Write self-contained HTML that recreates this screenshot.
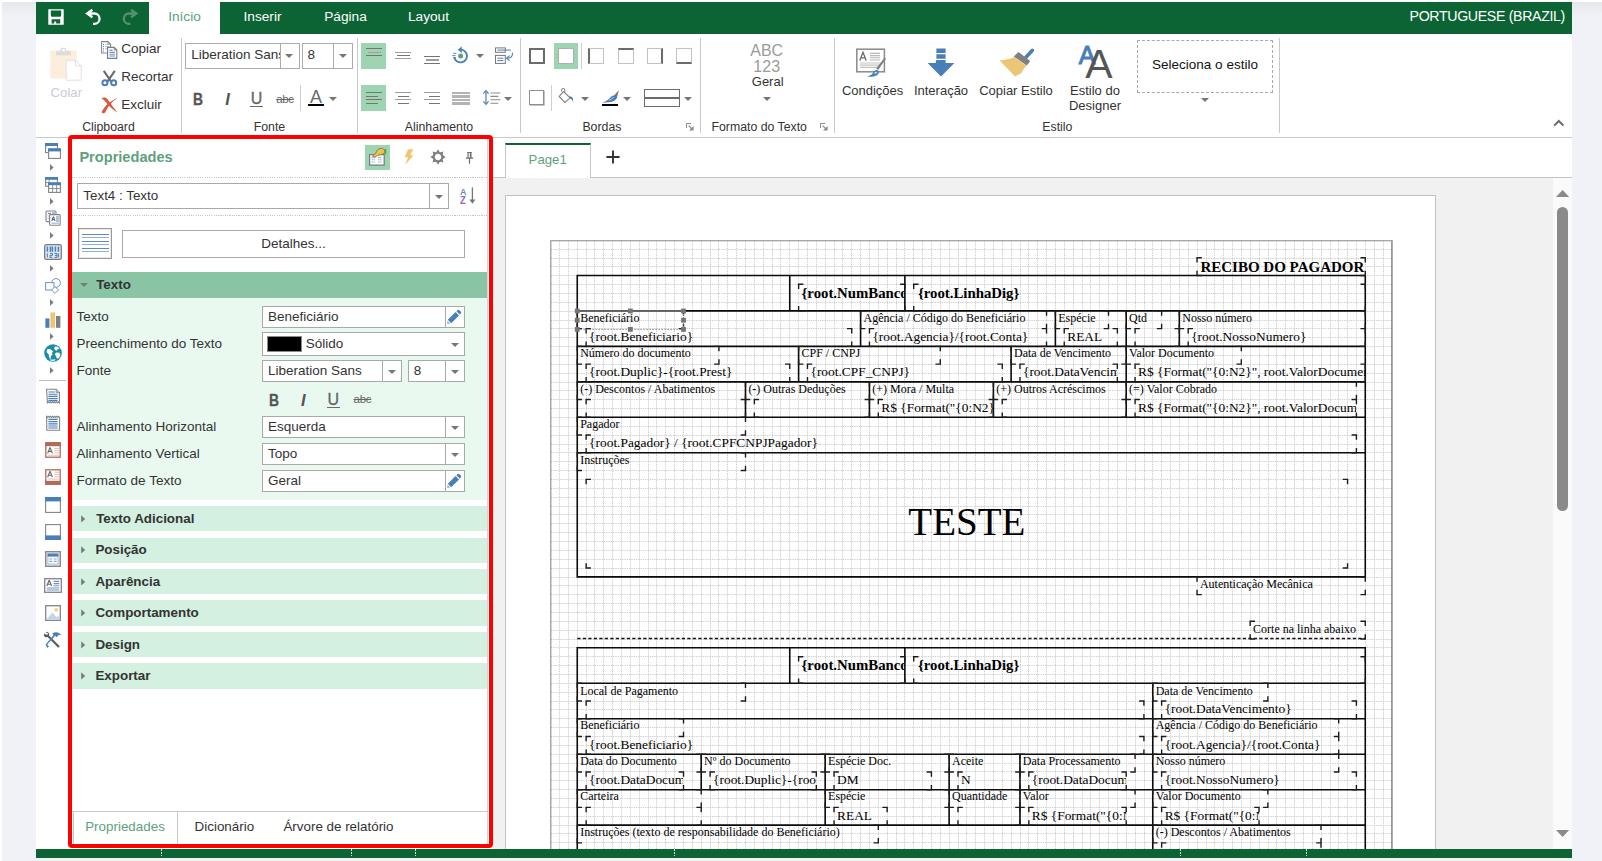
<!DOCTYPE html>
<html lang="pt-BR">
<head>
<meta charset="utf-8">
<title>Designer</title>
<style>
html,body{margin:0;padding:0}
body{width:1602px;height:861px;overflow:hidden;position:relative;background:#fff;font-family:"Liberation Sans",Arial,sans-serif;font-size:13px;color:#333}
body:before{content:"";position:absolute;left:2px;top:2px;right:0;bottom:0;background:linear-gradient(180deg,#e6e7ec 0,#f1f2f7 14px,#f1f2f7 100%)}
body>div,body>svg{position:absolute;box-sizing:border-box}
div div,div svg{position:absolute;box-sizing:border-box}
.t{height:20px;line-height:20px;white-space:nowrap}
svg{overflow:visible}
.rep,.rep div{font-family:"Liberation Serif","Times New Roman",serif;color:#000}

</style>
</head>
<body>
<!-- frame -->
<div style="left:36px;top:2px;width:1536px;height:856px;background:#fff"></div>
<div style="left:36px;top:2px;width:1536px;height:32px;background:#0c6333"></div>
<svg style="left:48px;top:9px;" width="16" height="16" viewBox="0 0 16 16"><path fill="#fff" fill-rule="evenodd" d="M0.3 0.3h15.4v15.4h-15.4z M2.8 1.6v4.6q0 1.6 1.6 1.6h7.2q1.6 0 1.6-1.6v-4.6z M3.6 10.2v4.2h2.6v-2h2v2h4v-4.2z"/></svg>
<svg style="left:84px;top:8px;" width="18" height="18" viewBox="0 0 18 18"><path fill="none" stroke="#fff" stroke-width="2.300" d="M8.400 1.700L3.100 5.500l5.300 3.800M3.800 5.500h6.600a5.150 5.150 0 0 1 0 10.300h-1.400"/></svg>
<svg style="left:121px;top:8px;" width="18" height="18" viewBox="0 0 18 18"><path opacity="0.300" fill="none" stroke="#fff" stroke-width="2.300" d="M10 1.700l5.300 3.800-5.300 3.800M14.600 5.500h-6.600a5.150 5.150 0 0 0 0 10.300h1.400"/></svg>
<div style="left:149px;top:2px;width:71px;height:33px;background:#fff"></div>
<div class="t" style="left:34.5px;top:6.8px;width:300px;text-align:center;font-size:13.7px;color:#5f9f7e;">Início</div>
<div class="t" style="left:112.5px;top:6.8px;width:300px;text-align:center;font-size:13.7px;color:#fff;">Inserir</div>
<div class="t" style="left:195.5px;top:6.8px;width:300px;text-align:center;font-size:13.7px;color:#fff;">Página</div>
<div class="t" style="left:278.5px;top:6.8px;width:300px;text-align:center;font-size:13.7px;color:#fff;">Layout</div>
<div class="t" style="left:1265px;top:5.8px;width:300px;text-align:right;font-size:14.2px;color:#fff;letter-spacing:-0.35px;">PORTUGUESE (BRAZIL)</div>
<div style="left:36px;top:137px;width:1536px;height:1px;background:#c8c8c8"></div>
<!-- ribbon -->
<svg style="left:50px;top:46px;" width="33" height="36" viewBox="0 0 33 36"><rect x="0.2" y="4.6" width="26.6" height="27.8" rx="1" fill="#fbeedc"/><path d="M6 9.2v-3.2q0-1 1-1h3.4v-1.6q0-1.6 1.6-1.6h2.6q1.6 0 1.6 1.6v1.6h3.6q1 0 1 1v3.2z" fill="#dcdcdc"/><rect x="12" y="3" width="2.8" height="2.4" fill="#fff"/><path d="M16.2 14.4h9.4l5.6 5.6v14.2h-15z" fill="#fff" stroke="#e1e1e1" stroke-width="1"/><path d="M25.6 14.4v5.6h5.6" fill="none" stroke="#e1e1e1" stroke-width="1"/></svg>
<div class="t" style="left:-83.7px;top:82.9px;width:300px;text-align:center;font-size:13.3px;color:#cbcbd6;">Colar</div>
<svg style="left:101px;top:41px;" width="17" height="18" viewBox="0 0 17 18"><path d="M0.6 0.6h6.4l2.6 2.6v8.8h-9z" fill="#fff" stroke="#8a8a8a" stroke-width="1.1"/><path d="M7 0.6v2.6h2.6" fill="none" stroke="#8a8a8a" stroke-width="0.9"/><path d="M2 3.4h1M2 5.6h1M2 7.8h1M2 10h1" stroke="#4a7eb8" stroke-width="1"/><path d="M4 3.4h3M4 5.6h4M4 7.8h2" stroke="#a9c3e2" stroke-width="1"/><path d="M6.6 6.4h6.6l2.6 2.6v8.4h-9.2z" fill="#fff" stroke="#7b7b7b" stroke-width="1.1"/><path d="M13.2 6.4v2.6h2.6" fill="none" stroke="#7b7b7b" stroke-width="0.9"/><path d="M8.4 9.2h3.2" stroke="#4a7eb8" stroke-width="1"/><path d="M8.4 11.4h5.6M8.4 13.2h5.6M8.4 15h5.6" stroke="#6f97c8" stroke-width="1.1"/></svg>
<div class="t" style="left:121.2px;top:39.2px;font-size:13.5px;color:#333;">Copiar</div>
<svg style="left:101px;top:70px;" width="17" height="17" viewBox="0 0 17 17"><path d="M2.800 0.800l7.400 10.800M13.800 0.800l-7.400 10.800" stroke="#6b6b6b" stroke-width="2.100" fill="none"/><circle cx="3.900" cy="12.700" r="2.500" fill="#fff" stroke="#4a7eb8" stroke-width="2"/><circle cx="12.700" cy="12.700" r="2.500" fill="#fff" stroke="#4a7eb8" stroke-width="2"/></svg>
<div class="t" style="left:121.2px;top:67.2px;font-size:13.5px;color:#333;">Recortar</div>
<svg style="left:101px;top:97px;" width="17" height="17" viewBox="0 0 17 17"><path d="M0.400 1.600c1.800-1.600 4.400-1.600 6.200.600 2.400 3 5.600 8.400 10 13.400-5.200-3.200-8.600-6.400-10.800-9.400-1.600-2-3.200-3.600-5.400-4.600z" fill="#d9573b"/><path d="M16.600 1.200c-5.200 2.800-9.600 7.800-12 13.600-.600 1.600-2.600 2-4 .800 2.200-6.200 8.600-11.800 16-14.400z" fill="#d9573b"/></svg>
<div class="t" style="left:121.2px;top:95.2px;font-size:13.5px;color:#333;">Excluir</div>
<div class="t" style="left:-41.5px;top:117.2px;width:300px;text-align:center;font-size:12.3px;color:#333;">Clipboard</div>
<div style="left:180.9px;top:38px;width:1px;height:95px;background:#c9c9c9"></div>
<div style="left:185px;top:43px;width:115px;height:26px;background:#fff;border:1px solid #ababab"></div>
<div style="left:280px;top:43px;width:1px;height:26px;background:#ababab"></div>
<div style="left:186px;top:44px;width:94px;height:24px;overflow:hidden"><div class="t" style="left:5.2px;top:1.1px;font-size:13.5px;color:#333;">Liberation Sans</div></div>
<svg style="left:285.4px;top:54.3px;" width="8" height="4" viewBox="0 0 8 4"><path d="M0 0h8l-4 4z" fill="#767676"/></svg>
<div style="left:302px;top:43px;width:51px;height:26px;background:#fff;border:1px solid #ababab"></div>
<div style="left:333px;top:43px;width:1px;height:26px;background:#ababab"></div>
<div class="t" style="left:307.5px;top:45.1px;font-size:13.5px;color:#333;">8</div>
<svg style="left:339.4px;top:54.3px;" width="8" height="4" viewBox="0 0 8 4"><path d="M0 0h8l-4 4z" fill="#767676"/></svg>
<div class="t" style="left:47.80000000000001px;top:88.8px;width:300px;text-align:center;font-size:16.5px;color:#555;font-weight:bold;transform:scaleX(0.84);-webkit-text-stroke:0.3px #555;">B</div>
<div class="t" style="left:77.6px;top:88.8px;width:300px;text-align:center;font-size:16.5px;color:#555;font-weight:bold;font-style:italic;">I</div>
<div class="t" style="left:106.60000000000002px;top:88.8px;width:300px;text-align:center;font-size:16px;color:#666;-webkit-text-stroke:0.3px #666;">U</div>
<div style="left:250.2px;top:106.2px;width:12.8px;height:1px;background:#6a6a6a"></div>
<div class="t" style="left:135.0px;top:88.5px;width:300px;text-align:center;font-size:11.5px;color:#666;text-decoration:line-through;letter-spacing:-0.3px;">abc</div>
<div style="left:300px;top:85px;width:1px;height:26px;background:#cfcfcf"></div>
<div class="t" style="left:166.0px;top:86.7px;width:300px;text-align:center;font-size:18px;color:#6a6a6a;">A</div>
<div style="left:308px;top:103.8px;width:16px;height:2.1px;background:#000"></div>
<svg style="left:329.4px;top:96.8px;" width="8" height="4" viewBox="0 0 8 4"><path d="M0 0h8l-4 4z" fill="#767676"/></svg>
<div class="t" style="left:119.5px;top:117.2px;width:300px;text-align:center;font-size:12.3px;color:#333;">Fonte</div>
<div style="left:356.9px;top:38px;width:1px;height:95px;background:#c9c9c9"></div>
<div style="left:361px;top:43px;width:25px;height:26px;background:#9fd4b3"></div>
<div style="left:366.0px;top:47.95px;width:16px;height:1.1px;background:#757575"></div><div style="left:367.5px;top:51.550000000000004px;width:13px;height:1.1px;background:#9e9e9e"></div><div style="left:366.0px;top:55.150000000000006px;width:16px;height:1.1px;background:#757575"></div>
<div style="left:395.0px;top:51.550000000000004px;width:16px;height:1.1px;background:#9e9e9e"></div><div style="left:396.5px;top:54.95px;width:13px;height:1.1px;background:#757575"></div><div style="left:395.0px;top:58.35px;width:16px;height:1.1px;background:#9e9e9e"></div>
<div style="left:424.0px;top:55.95px;width:16px;height:1.1px;background:#757575"></div><div style="left:425.5px;top:59.45px;width:13px;height:1.1px;background:#9e9e9e"></div><div style="left:424.0px;top:62.85px;width:16px;height:1.1px;background:#757575"></div>
<svg style="left:451px;top:46px;" width="19" height="19" viewBox="0 0 19 19"><path d="M9.6 3.6a6.4 6.4 0 1 1-6.3 7.6" fill="none" stroke="#4a7eb8" stroke-width="1.9"/><path d="M10.8 0.4l-4 3.4 4 3.2z" fill="#4a7eb8"/><circle cx="9.6" cy="10" r="2.5" fill="#5f9f7e"/><path d="M2.2 7.4h3M1.2 9.6h3.4M2.2 11.600h2.600" stroke="#4a7eb8" stroke-width="0.9"/></svg>
<svg style="left:475.5px;top:54.3px;" width="8" height="4" viewBox="0 0 8 4"><path d="M0 0h8l-4 4z" fill="#767676"/></svg>
<svg style="left:495px;top:46.6px;" width="19" height="18" viewBox="0 0 19 18"><rect x="0.5" y="0.9" width="9.8" height="4.4" fill="#fff" stroke="#777" stroke-width="1"/><rect x="0.5" y="8.4" width="9.8" height="8" fill="#fff" stroke="#777" stroke-width="1"/><path d="M2.400 3.100h13.400M2.400 11.200h6M2.400 13.600h6" stroke="#4a7eb8" stroke-width="1"/><path d="M17.400 5.800c.4 3.400-1.600 5.400-5 5.400" fill="none" stroke="#4a7eb8" stroke-width="1.1"/><path d="M14.600 8.600l-3.200 2.600 3.200 2.400" fill="none" stroke="#4a7eb8" stroke-width="1.100"/></svg>
<div style="left:361px;top:85px;width:25px;height:26px;background:#9fd4b3"></div>
<div style="left:366px;top:92.35000000000001px;width:16px;height:1.1px;background:#757575"></div><div style="left:366px;top:95.75px;width:11.5px;height:1.1px;background:#757575"></div><div style="left:366px;top:99.15px;width:16px;height:1.1px;background:#757575"></div><div style="left:366px;top:102.65px;width:11.5px;height:1.1px;background:#757575"></div>
<div style="left:395.0px;top:92.35000000000001px;width:16px;height:1.1px;background:#9e9e9e"></div><div style="left:397.5px;top:95.75px;width:11px;height:1.1px;background:#757575"></div><div style="left:395.0px;top:99.15px;width:16px;height:1.1px;background:#9e9e9e"></div><div style="left:397.5px;top:102.65px;width:11px;height:1.1px;background:#757575"></div>
<div style="left:424px;top:92.35000000000001px;width:16px;height:1.1px;background:#9e9e9e"></div><div style="left:428.5px;top:95.75px;width:11.5px;height:1.1px;background:#757575"></div><div style="left:424px;top:99.15px;width:16px;height:1.1px;background:#9e9e9e"></div><div style="left:428.5px;top:102.65px;width:11.5px;height:1.1px;background:#757575"></div>
<div style="left:452px;top:91.9px;width:18px;height:2.2px;background:#b3b3b3"></div>
<div style="left:452px;top:95.4px;width:18px;height:2.2px;background:#b3b3b3"></div>
<div style="left:452px;top:98.9px;width:18px;height:2.2px;background:#b3b3b3"></div>
<div style="left:452px;top:102.4px;width:18px;height:2.2px;background:#b3b3b3"></div>
<svg style="left:483px;top:90px;" width="18" height="15" viewBox="0 0 18 15"><path d="M3 2v11" stroke="#4a7eb8" stroke-width="1.2"/><path d="M0.400 3.600l2.600-3 2.600 3M0.400 11.400l2.600 3 2.600-3" fill="none" stroke="#4a7eb8" stroke-width="1.2"/><path d="M7.400 3h10M7.400 6.400h8M7.400 9.800h10M7.400 13.200h8" stroke="#8a8a8a" stroke-width="1.100"/></svg>
<svg style="left:504.4px;top:96.8px;" width="8" height="4" viewBox="0 0 8 4"><path d="M0 0h8l-4 4z" fill="#767676"/></svg>
<div class="t" style="left:289.0px;top:117.2px;width:300px;text-align:center;font-size:12.3px;color:#333;">Alinhamento</div>
<div style="left:519.9px;top:38px;width:1px;height:95px;background:#c9c9c9"></div>
<div style="left:529.2px;top:48.2px;width:15.6px;height:15.4px;border:2px solid #6b6b6b;background:#fff"></div>
<div style="left:554px;top:43px;width:24px;height:26px;background:#9fd4b3"></div>
<div style="left:558.2px;top:48.2px;width:15.6px;height:15.4px;border:1px solid #b0b0b0;background:#fff"></div>
<div style="left:581px;top:43px;width:1px;height:26px;background:#cfcfcf"></div>
<div style="left:588.2px;top:48.2px;width:15.6px;height:15.4px;border:1px solid #c2c2c2;border-left:2px solid #6b6b6b;background:#fff"></div>
<div style="left:618.2px;top:48.2px;width:15.6px;height:15.4px;border:1px solid #c2c2c2;border-top:2px solid #6b6b6b;background:#fff"></div>
<div style="left:647.2px;top:48.2px;width:15.6px;height:15.4px;border:1px solid #c2c2c2;border-right:2px solid #6b6b6b;background:#fff"></div>
<div style="left:676.2px;top:48.2px;width:15.6px;height:15.4px;border:1px solid #c2c2c2;border-bottom:2px solid #6b6b6b;background:#fff"></div>
<div style="left:529.2px;top:90.2px;width:15.2px;height:14.8px;border:1px solid #8f8f8f;background:#fff;box-shadow:0.8px 0.8px 0 #b5b5b5"></div>
<div style="left:551px;top:85px;width:1px;height:26px;background:#cfcfcf"></div>
<svg style="left:558px;top:88px;" width="18" height="17" viewBox="0 0 18 17"><path d="M3.600 3.400v-1.400q0-1.600 1.600-1.600t1.600 1.600v4.600" fill="none" stroke="#808080" stroke-width="1"/><path d="M5.400 3.600l6.800 6.200-5.400 4.600-5.600-6z" fill="#fff" stroke="#808080" stroke-width="1.1"/><path d="M11.600 8.200c2.800.2 4 2 3.400 5.800-.6-2-1.600-3.400-3.600-3.800z" fill="#4a7eb8"/></svg>
<svg style="left:581.3px;top:96.8px;" width="8" height="4" viewBox="0 0 8 4"><path d="M0 0h8l-4 4z" fill="#767676"/></svg>
<svg style="left:601px;top:88px;" width="19" height="18" viewBox="0 0 19 18"><path d="M17.800 2l-4.800 5.600 3.200 1.400z" fill="#7d7d7d"/><path d="M1 14.200c3.600-.2 6-2.200 8.400-4.800 1.600-1.600 3.400-2.600 6-2l.8 2.200c-1.400 2.600-3.600 4-6.600 4.400-2.600.4-5.400.8-8.600.2z" fill="#4a7eb8"/><path d="M8 12.200c1.800-.4 3.600-1.600 4.600-3" stroke="#cfe0f2" stroke-width="0.9" fill="none"/></svg>
<div style="left:602px;top:103.8px;width:16px;height:2.1px;background:#000"></div>
<svg style="left:623.3px;top:96.8px;" width="8" height="4" viewBox="0 0 8 4"><path d="M0 0h8l-4 4z" fill="#767676"/></svg>
<div style="left:644px;top:89px;width:36px;height:18px;border:1px solid #6b6b6b;background:#fff"></div>
<div style="left:644px;top:96.7px;width:36px;height:2px;background:#6b6b6b"></div>
<svg style="left:684.4px;top:96.8px;" width="8" height="4" viewBox="0 0 8 4"><path d="M0 0h8l-4 4z" fill="#767676"/></svg>
<div class="t" style="left:451.9px;top:117.2px;width:300px;text-align:center;font-size:12.3px;color:#333;">Bordas</div>
<svg style="left:686px;top:123px;" width="8" height="8" viewBox="0 0 8 8"><path d="M0.5 5v-4.5h4.5" fill="none" stroke="#8a8a8a" stroke-width="1"/><path d="M7.6 3v4.6h-4.6z" fill="#8a8a8a"/><path d="M2.6 2.6l3.4 3.4" stroke="#8a8a8a" stroke-width="1.1"/></svg>
<div style="left:700.1px;top:38px;width:1px;height:95px;background:#c9c9c9"></div>
<div class="t" style="left:616.7px;top:40.7px;width:300px;text-align:center;font-size:16px;color:#9b9b9b;">ABC</div>
<div class="t" style="left:616.7px;top:56.8px;width:300px;text-align:center;font-size:16px;color:#9b9b9b;">123</div>
<div class="t" style="left:617.7px;top:71.5px;width:300px;text-align:center;font-size:13px;color:#333;">Geral</div>
<svg style="left:763.4px;top:97px;" width="8" height="4" viewBox="0 0 8 4"><path d="M0 0h8l-4 4z" fill="#767676"/></svg>
<div class="t" style="left:609.2px;top:117.2px;width:300px;text-align:center;font-size:12.3px;color:#333;">Formato do Texto</div>
<svg style="left:820px;top:123px;" width="8" height="8" viewBox="0 0 8 8"><path d="M0.5 5v-4.5h4.5" fill="none" stroke="#8a8a8a" stroke-width="1"/><path d="M7.6 3v4.6h-4.6z" fill="#8a8a8a"/><path d="M2.6 2.6l3.4 3.4" stroke="#8a8a8a" stroke-width="1.1"/></svg>
<div style="left:834.1px;top:38px;width:1px;height:95px;background:#c9c9c9"></div>
<svg style="left:856px;top:48px;" width="31" height="30" viewBox="0 0 31 30"><rect x="0.8" y="1.2" width="27.600" height="22.600" fill="#fff" stroke="#8a8a8a" stroke-width="1.5"/><path d="M14 5.400h10M14 7.600h10M14 9.800h10M14 12h10" stroke="#b9b9b9" stroke-width="1.100"/><path d="M4 15h20M4 17.200h20M4 19.400h20" stroke="#c4c4c4" stroke-width="1.2"/><path d="M3.800 12.400l3.200-8.200 3.200 8.200M4.900 9.800h4.400" fill="none" stroke="#6a6a6a" stroke-width="1.3"/><path d="M30 10.600l-1.400-1-8.400 10.800 2 1.600z" fill="#7f7f7f"/><path d="M11 28.400c3.400-.4 5.600-2.400 7.400-5.400 1.400-1.200 3-1.200 4.200.2.400 1.800-.2 3.200-2 4.200-3 1.400-6 1.600-9.600 1z" fill="#4a7eb8"/><ellipse cx="19.600" cy="24.800" rx="1.300" ry="0.800" fill="#e8f0fa" transform="rotate(-35 19.600 24.800)"/></svg>
<div class="t" style="left:722.6px;top:81.4px;width:300px;text-align:center;font-size:13px;color:#333;">Condições</div>
<svg style="left:927px;top:48px;" width="28" height="29" viewBox="0 0 28 29"><path d="M9.400 0.400h9.200v4.600h-9.200zM9.400 6.200h9.200v4.600h-9.200zM9.400 12h9.200v3h8.800l-13.400 13.600-13.400-13.600h8z" fill="#4a7eb8"/></svg>
<div class="t" style="left:791.0px;top:81.4px;width:300px;text-align:center;font-size:13px;color:#333;">Interação</div>
<svg style="left:1000px;top:47px;" width="34" height="31" viewBox="0 0 34 31"><path d="M32.400 3.300L25.300 11" stroke="#4a7eb8" stroke-width="3.600" stroke-linecap="round" fill="none"/><path d="M17.900 5.600q.6-.5 1.300 0l10.400 8q.6.600.100 1.300l-3 3.600-12.900-9z" fill="#808080"/><path d="M14 10l12.600 8.700c-2.600 2.400-4 5-5.300 7.500-1.600 1-3.600 2-6.200 3.300l-15.700-16.300c5.600-.200 10.600-1 14.600-3.200z" fill="#ecc577"/></svg>
<div class="t" style="left:866.0px;top:81.4px;width:300px;text-align:center;font-size:13px;color:#333;">Copiar Estilo</div>
<div class="t" style="left:937.0px;top:44.7px;width:300px;text-align:center;font-size:25px;color:#4a7eb8;-webkit-text-stroke:1px #4a7eb8;">A</div>
<div class="t" style="left:949.0px;top:54.1px;width:300px;text-align:center;font-size:41px;color:#555;">A</div>
<div class="t" style="left:945.0px;top:81.4px;width:300px;text-align:center;font-size:13px;color:#333;">Estilo do</div>
<div class="t" style="left:945.0px;top:95.8px;width:300px;text-align:center;font-size:13px;color:#333;">Designer</div>
<div style="left:1137px;top:40px;width:136px;height:53px;border:1px dashed #a8a8a8"></div>
<div class="t" style="left:1055.0px;top:55.2px;width:300px;text-align:center;font-size:13.5px;color:#111;">Seleciona o estilo</div>
<svg style="left:1200.5px;top:97.7px;" width="8" height="4" viewBox="0 0 8 4"><path d="M0 0h8l-4 4z" fill="#767676"/></svg>
<div class="t" style="left:907.4000000000001px;top:117.2px;width:300px;text-align:center;font-size:12.3px;color:#333;">Estilo</div>
<div style="left:1279.1px;top:38px;width:1px;height:95px;background:#c9c9c9"></div>
<svg style="left:1553px;top:118.5px;" width="12" height="8" viewBox="0 0 12 8"><path d="M1.200 6.600l4.600-4.600 4.600 4.600" fill="none" stroke="#6a6a6a" stroke-width="2"/></svg>
<!-- left -->
<svg style="left:45px;top:142.9px;" width="16" height="16" viewBox="0 0 16 16"><rect x="0.6" y="0.6" width="11.8" height="9" fill="#fff" stroke="#848484" stroke-width="1.1"/><rect x="0" y="0" width="13" height="3" fill="#4a7eb8"/><rect x="3.600" y="6" width="11.800" height="9.400" fill="#fff" stroke="#848484" stroke-width="1.1"/><rect x="3" y="5.400" width="13" height="3" fill="#4a7eb8"/></svg>
<svg style="left:45px;top:176.6px;" width="16" height="16" viewBox="0 0 16 16"><rect x="0.6" y="0.6" width="11.8" height="8.600" fill="#fff" stroke="#848484" stroke-width="1.1"/><rect x="0" y="0" width="13" height="2.800" fill="#4a7eb8"/><path d="M0.600 5.400h3M4.200 3v3" stroke="#848484" stroke-width="0.9"/><rect x="3.600" y="6" width="11.800" height="9.400" fill="#fff" stroke="#848484" stroke-width="1.1"/><rect x="3" y="5.400" width="13" height="2.800" fill="#4a7eb8"/><path d="M3.600 11.600h11.800M7.600 8.200v7.200M11.600 8.200v7.200" stroke="#848484" stroke-width="0.9"/></svg>
<svg style="left:45px;top:210.4px;" width="16" height="16" viewBox="0 0 16 16"><rect x="1" y="1" width="10" height="10.600" rx="1" fill="#fff" stroke="#848484" stroke-width="1.1"/><path d="M3 3.400h3M7 3h3" stroke="#4a7eb8" stroke-width="1"/><path d="M2.600 6h1.600M2.600 8.600h1.600" stroke="#9bb6da" stroke-width="1"/><rect x="4.600" y="4.600" width="10.600" height="10.600" rx="1" fill="#fff" stroke="#848484" stroke-width="1.1"/><path d="M6.800 11l1.400-4.200h.4l1.400 4.200M7.300 9.600h2.200" fill="none" stroke="#555" stroke-width="1"/><path d="M11 7h3M11 9h3M11 11h3" stroke="#4a7eb8" stroke-width="0.9"/><path d="M6.400 13.200h7.600" stroke="#9bb6da" stroke-width="1.100"/></svg>
<svg style="left:44px;top:244.1px;" width="18" height="16" viewBox="0 0 18 16"><rect x="0.700" y="0.700" width="16.600" height="14.600" rx="1.600" fill="#dfe8f4" stroke="#7b7b7b" stroke-width="1.300"/><path d="M3.400 2.400v5.400M6.400 2.400v5.400M8.400 2.400v5.400M11.400 2.400v5.400M14.400 2.400v5.400" stroke="#4a7eb8" stroke-width="1.500"/><path d="M3.400 9.400v4M6 9.400h2.400v2h-2.400v2h2.400M10.400 9.400h2.600v4h-2.600M10.800 11.400h2.200M14.600 9.400v4" fill="none" stroke="#4a7eb8" stroke-width="1"/></svg>
<svg style="left:45px;top:277.9px;" width="16" height="16" viewBox="0 0 16 16"><circle cx="11" cy="5" r="4.400" fill="#fff" stroke="#6d93c6" stroke-width="1"/><rect x="0.600" y="4.600" width="8.400" height="7.400" fill="#fff" stroke="#6d93c6" stroke-width="1"/><path d="M10 8.600l3.400 3.400-3.400 3.400-3.400-3.400z" fill="#fff" stroke="#6d93c6" stroke-width="1"/></svg>
<svg style="left:45px;top:311.6px;" width="16" height="16" viewBox="0 0 16 16"><rect x="0.400" y="6.400" width="4" height="9.400" fill="#4a7eb8"/><rect x="5.400" y="0.400" width="4.600" height="15.400" fill="#ecc577"/><rect x="11" y="4" width="4.400" height="11.800" fill="#808080"/></svg>
<svg style="left:44px;top:344.4px;" width="18" height="18" viewBox="0 0 18 18"><circle cx="9" cy="9" r="8.800" fill="#1b8ca8"/><path d="M3 5.600c1.600-.8 3.400-.6 4.400.4l1.800 1.600-1.400 1.400.8 1.400-1.800 1.800-.2 3-1.400-1.600-.6-3.400-2-2z" fill="#fff"/><path d="M10.800 2.400l3 .4 1.800 2.200-2.200.2-.8 1.600-1.600-.8-.8-1.600z" fill="#fff"/><path d="M12 8.400l3.400.4 1 2.200-1.400 3-2.200.8-.6-2.600-1.400-1.600z" fill="#fff"/><path d="M5.600 15.200c2 .4 4.400.4 6-.2l-1 1.800c-1.400.4-3 .2-4.200-.4z" fill="#d4edf3"/></svg>
<svg style="left:50.4px;top:164.2px;" width="4" height="7" viewBox="0 0 4 7"><path d="M0 0l3.600 3.400-3.600 3.400z" fill="#7c7c7c"/></svg>
<svg style="left:50.4px;top:197.89999999999998px;" width="4" height="7" viewBox="0 0 4 7"><path d="M0 0l3.600 3.400-3.600 3.400z" fill="#7c7c7c"/></svg>
<svg style="left:50.4px;top:231.7px;" width="4" height="7" viewBox="0 0 4 7"><path d="M0 0l3.600 3.400-3.600 3.400z" fill="#7c7c7c"/></svg>
<svg style="left:50.4px;top:265.40000000000003px;" width="4" height="7" viewBox="0 0 4 7"><path d="M0 0l3.600 3.400-3.600 3.400z" fill="#7c7c7c"/></svg>
<svg style="left:50.4px;top:299.2px;" width="4" height="7" viewBox="0 0 4 7"><path d="M0 0l3.600 3.400-3.600 3.400z" fill="#7c7c7c"/></svg>
<svg style="left:50.4px;top:332.90000000000003px;" width="4" height="7" viewBox="0 0 4 7"><path d="M0 0l3.600 3.400-3.600 3.400z" fill="#7c7c7c"/></svg>
<svg style="left:50.4px;top:366.7px;" width="4" height="7" viewBox="0 0 4 7"><path d="M0 0l3.600 3.400-3.600 3.400z" fill="#7c7c7c"/></svg>
<div style="left:39px;top:380px;width:27px;height:1px;background:#bdbdbd"></div>
<svg style="left:45px;top:388.3px;" width="16" height="16" viewBox="0 0 16 16"><path d="M1.600 1.200h9.600l3.200 3.200v10.400l-1 -1-1 1-1-1-1 1-1-1-1 1-1-1-1 1-1-1-1 1-1-1-1 1z" fill="#fff" stroke="#848484" stroke-width="1.1"/><path d="M11.200 1.200v3.200h3.200" fill="#d9d9d9" stroke="#848484" stroke-width="0.9"/><path d="M3.400 4h6.600M3.400 6.200h9.200M3.400 8.400h9.200M3.400 10.600h9.200M3.400 12.600h9.200" stroke="#4a7eb8" stroke-width="1.1"/></svg>
<svg style="left:45px;top:415.3px;" width="16" height="16" viewBox="0 0 16 16"><path d="M1.600 1.400l1 1 1-1 1 1 1-1 1 1 1-1 1 1 1-1 1 1 1-1 1 1 1-1 1 1v12.800h-12.800z" fill="#fff" stroke="#848484" stroke-width="1.1"/><path d="M3.400 4.400h9.200M3.400 6.600h9.200M3.400 8.800h9.200M3.400 11h9.200M3.400 13h9.200" stroke="#4a7eb8" stroke-width="1.2"/></svg>
<svg style="left:45px;top:442.4px;" width="16" height="16" viewBox="0 0 16 16"><rect x="0.800" y="0.800" width="14.400" height="14.400" fill="#fff" stroke="#b26b5b" stroke-width="1.300"/><rect x="0.200" y="0.200" width="15.600" height="4" fill="#b26b5b"/><path d="M2.600 11.400l2.200-5.600h.4l2.200 5.600M3.400 9.400h3.200" fill="none" stroke="#6a6a6a" stroke-width="1.100"/><path d="M9.400 6.400h4.600M9.400 8.600h4.600M9.400 10.800h4.600M2.600 13.200h11.400" stroke="#dcc0b9" stroke-width="1"/></svg>
<svg style="left:45px;top:469.4px;" width="16" height="16" viewBox="0 0 16 16"><rect x="0.800" y="0.800" width="14.400" height="14.400" fill="#fff" stroke="#b26b5b" stroke-width="1.300"/><rect x="0.200" y="11.800" width="15.600" height="4" fill="#b26b5b"/><path d="M2.600 8.200l2.200-5.600h.4l2.200 5.600M3.400 6.200h3.200" fill="none" stroke="#6a6a6a" stroke-width="1.100"/><path d="M9.400 3.200h4.600M9.400 5.400h4.600M9.400 7.600h4.600M2.600 10h11.400" stroke="#dcc0b9" stroke-width="1"/></svg>
<svg style="left:45px;top:496.5px;" width="16" height="16" viewBox="0 0 16 16"><rect x="0.600" y="0.600" width="14.800" height="14.800" fill="#fff" stroke="#848484" stroke-width="1.1"/><rect x="0" y="0" width="16" height="4.400" fill="#4a7eb8"/></svg>
<svg style="left:45px;top:523.5px;" width="16" height="16" viewBox="0 0 16 16"><rect x="0.600" y="0.600" width="14.800" height="14.800" fill="#fff" stroke="#848484" stroke-width="1.1"/><rect x="0" y="11.400" width="16" height="4.600" fill="#4a7eb8"/></svg>
<svg style="left:45px;top:550.6px;" width="16" height="16" viewBox="0 0 16 16"><rect x="0.700" y="0.700" width="14.600" height="14.600" fill="#e6e6e6" stroke="#848484" stroke-width="1.300"/><rect x="3" y="3" width="10" height="10" fill="#fff" stroke="#9bb6da" stroke-width="0.800"/><rect x="2.600" y="2.600" width="10.800" height="3" fill="#4a7eb8"/><path d="M4.400 8h2.800M8.800 8h2.800M4.400 10.400h2.800M8.800 10.400h2.800" stroke="#7ea2d2" stroke-width="1.200"/></svg>
<svg style="left:44px;top:578.1px;" width="18" height="15" viewBox="0 0 18 15"><rect x="0.700" y="0.700" width="16.600" height="13.600" fill="#fff" stroke="#848484" stroke-width="1.300"/><path d="M2.800 8l2.200-5.400h.4l2.200 5.400M3.600 6.200h3.200" fill="none" stroke="#666" stroke-width="1.100"/><path d="M9.600 3.400h5.600M9.600 5.600h5.600M9.600 7.800h5.600M2.800 10h12.400M2.800 12h12.400" stroke="#6d93c6" stroke-width="1.100"/></svg>
<svg style="left:45px;top:604.7px;" width="16" height="16" viewBox="0 0 16 16"><rect x="0.700" y="0.700" width="14.600" height="14.600" fill="#fff" stroke="#848484" stroke-width="1.300"/><circle cx="11.200" cy="4.800" r="1.900" fill="#f2cf87"/><path d="M1.400 14.600l6-7 4.200 4.600 1.400-1.400 1.600 1.600v2.200z" fill="#c5d6ea"/></svg>
<svg style="left:44px;top:630.7px;" width="18" height="18" viewBox="0 0 18 18"><path d="M1.200 1.400l2.200-.6 2 2-.4 1.800 10.800 10.600-1.600 1.600-10.600-10.800-1.800.4-2-2 .8-2.200 1.600 1.600 1.400-.4.400-1.400z" fill="#5b5b5b"/><path d="M8.200 2.600c3-2.200 6.800-1.600 9.200 1.600l-2.600-.4-2.200 2.400-1.400-1.400-8 8.800 1.800 1.800-1.600 1.600-1.800-3.400 8-9.600z" fill="#4a7eb8"/></svg>
<!-- panel -->
<div style="left:70px;top:138px;width:420px;height:708px;background:#fff"></div>
<div style="left:487px;top:139px;width:1px;height:706px;background:#d5d5d5"></div>
<div class="t" style="left:79.4px;top:146.6px;font-size:14.6px;color:#5f9f7e;font-weight:bold;">Propriedades</div>
<div style="left:365px;top:145px;width:25px;height:25px;background:#9fd4b3"></div>
<svg style="left:368px;top:147px;" width="20" height="20" viewBox="0 0 20 20"><rect x="1.600" y="7.700" width="14.600" height="10.400" fill="#fff" stroke="#787878" stroke-width="1.200"/><path d="M3.600 10.600h4M3.600 12.800h4M3.600 15h4M10 10.600h4M10 12.800h4M10 15h4" stroke="#8fb3de" stroke-width="1.100" stroke-dasharray="1.4 0.5"/><path d="M16.400 2.200l1.900-.500v6l-1.900-1z" fill="#4caf50"/><path d="M4.600 9.400c.8-1.400 2-2.400 3.400-3.400.4-2.600 2.200-4.400 5-4.600 2.200-.100 3.600 1 3.800 2.800-.100 1.800-1.200 2.800-3.200 3.200-1.800.300-3 .300-4.200 1.400-.800.300-1.600.600-2.400 1.400z" fill="#e9c44f" stroke="#8a6a2c" stroke-width="0.800"/></svg>
<svg style="left:402.5px;top:148.6px;" width="12" height="16.5" viewBox="0 0 13 19"><path d="M5.400 0.400h6.200l-3.800 6.800h4l-9.600 11 3.200-8.600h-3.800z" fill="#f1c56f"/></svg>
<svg style="left:429px;top:148px;" width="18" height="18" viewBox="0 0 18 18"><g transform="translate(9 9)"><path d="M-1.900 -4.600L0 -7.700L1.900 -4.600z" fill="#7f7f7f" transform="rotate(0)"/><path d="M-1.900 -4.600L0 -7.700L1.900 -4.600z" fill="#7f7f7f" transform="rotate(45)"/><path d="M-1.900 -4.600L0 -7.700L1.900 -4.600z" fill="#7f7f7f" transform="rotate(90)"/><path d="M-1.900 -4.600L0 -7.700L1.900 -4.600z" fill="#7f7f7f" transform="rotate(135)"/><path d="M-1.900 -4.600L0 -7.700L1.900 -4.600z" fill="#7f7f7f" transform="rotate(180)"/><path d="M-1.900 -4.600L0 -7.700L1.900 -4.600z" fill="#7f7f7f" transform="rotate(225)"/><path d="M-1.900 -4.600L0 -7.700L1.900 -4.600z" fill="#7f7f7f" transform="rotate(270)"/><path d="M-1.900 -4.600L0 -7.700L1.900 -4.600z" fill="#7f7f7f" transform="rotate(315)"/><circle r="4.300" fill="none" stroke="#7f7f7f" stroke-width="2.100"/></g></svg>
<svg style="left:464.7px;top:151.8px;" width="9" height="12.6" viewBox="0 0 10 14"><path d="M2.400 0.600h5.200M3.400 0.600v5.800M6.600 0.600v5.800M1 6.800h8M5 6.800v6.400" fill="none" stroke="#6e6e6e" stroke-width="1.300"/><path d="M5.400 1v5.600h1.200v-5.600z" fill="#6e6e6e"/></svg>
<div style="left:72px;top:177px;width:416px;height:1px;background:repeating-linear-gradient(90deg,#c4c4c4 0 1px,transparent 1px 2.250px)"></div>
<div style="left:72px;top:215px;width:416px;height:1px;background:repeating-linear-gradient(90deg,#c4c4c4 0 1px,transparent 1px 2.250px)"></div>
<div style="left:77px;top:183.3px;width:372px;height:25.3px;background:#fff;border:1px solid #a9a9a9"></div><div style="left:429.4px;top:183.3px;width:1px;height:25.3px;background:#a9a9a9"></div>
<div class="t" style="left:83.3px;top:186.3px;font-size:13.4px;color:#333;">Text4 : Texto</div>
<svg style="left:435.4px;top:195.4px;" width="8" height="4" viewBox="0 0 8 4"><path d="M0 0h8l-4 4z" fill="#767676"/></svg>
<div class="t" style="left:460.1px;top:181.6px;font-size:9.8px;color:#5b8fd0;font-weight:bold;transform:scaleX(0.9);transform-origin:0 0;">A</div>
<div class="t" style="left:460.1px;top:190.6px;font-size:10px;color:#9a68b8;font-weight:bold;transform:scaleX(0.95);transform-origin:0 0;">Z</div>
<svg style="left:467.6px;top:187px;" width="9" height="19" viewBox="0 0 9 19"><path d="M4.400 0.400v14" fill="none" stroke="#757575" stroke-width="1.300"/><path d="M1.400 12.600h6l-3 4.200z" fill="#757575"/></svg>
<div style="left:78.2px;top:228.2px;width:33.6px;height:30.4px;background:#fff;border:1px solid #9a9a9a;box-shadow:inset 0 0 0 1px #e9e9e9"></div>
<div style="left:81.5px;top:233.7px;width:27px;height:1px;background:#5b8ac6"></div>
<div style="left:81.5px;top:237.14999999999998px;width:27px;height:1px;background:#8fb0d8"></div>
<div style="left:81.5px;top:240.6px;width:27px;height:1px;background:#5b8ac6"></div>
<div style="left:81.5px;top:244.04999999999998px;width:27px;height:1px;background:#8fb0d8"></div>
<div style="left:81.5px;top:247.5px;width:27px;height:1px;background:#5b8ac6"></div>
<div style="left:81.5px;top:250.95px;width:27px;height:1px;background:#8fb0d8"></div>
<div style="left:122px;top:230px;width:343px;height:27.6px;background:#fff;border:1px solid #a9a9a9"></div>
<div class="t" style="left:143.5px;top:233.5px;width:300px;text-align:center;font-size:13.5px;color:#333;">Detalhes...</div>
<div style="left:72px;top:272.2px;width:415.4px;height:25.4px;background:#89c5a5"></div>
<svg style="left:79.6px;top:282.7px;" width="8" height="4" viewBox="0 0 8 4"><path d="M0 0h8l-4 4z" fill="#7a7a7a"/></svg>
<div class="t" style="left:96.2px;top:274.5px;font-size:13.4px;color:#333;font-weight:bold;">Texto</div>
<div style="left:72px;top:297.6px;width:415.4px;height:202.4px;background:#e9f9f0"></div>
<div class="t" style="left:76.6px;top:307.3px;font-size:13.5px;color:#333;">Texto</div>
<div style="left:262px;top:306.2px;width:203px;height:21.6px;background:#fff;border:1px solid #a9a9a9"></div><div style="left:445.4px;top:306.2px;width:1px;height:21.6px;background:#a9a9a9"></div>
<div class="t" style="left:268px;top:307.3px;font-size:13.5px;color:#333;">Beneficiário</div>
<svg style="left:447.2px;top:309.2px;" width="15" height="15" viewBox="0 0 15 15"><path d="M10.400 1.200q1-1 2 0l1.400 1.400q1 1 0 2l-1 1-3.400-3.400z" fill="#4a7eb8"/><path d="M8.600 3l3.400 3.400-7.800 7.800-3.400-3.400z" fill="#4a7eb8"/><path d="M0.400 11.800l2.800 2.800-3 .4z" fill="#8fb0d8"/></svg>
<div class="t" style="left:76.6px;top:334.0px;font-size:13.5px;color:#333;">Preenchimento do Texto</div>
<div style="left:262px;top:332.4px;width:203px;height:23.2px;background:#fff;border:1px solid #a9a9a9"></div>
<div style="left:266.6px;top:335.6px;width:35px;height:16.7px;background:#000;border:1px solid #8a8a8a"></div>
<div class="t" style="left:305.8px;top:333.6px;font-size:13.5px;color:#333;">Sólido</div>
<svg style="left:451.3px;top:343px;" width="8" height="4" viewBox="0 0 8 4"><path d="M0 0h8l-4 4z" fill="#767676"/></svg>
<div class="t" style="left:76.6px;top:360.5px;font-size:13.5px;color:#333;">Fonte</div>
<div style="left:262px;top:360.2px;width:139.8px;height:21.6px;background:#fff;border:1px solid #a9a9a9"></div><div style="left:382.4px;top:360.2px;width:1px;height:21.6px;background:#a9a9a9"></div>
<div class="t" style="left:268px;top:361.3px;font-size:13.5px;color:#333;">Liberation Sans</div>
<svg style="left:388.4px;top:369.9px;" width="8" height="4" viewBox="0 0 8 4"><path d="M0 0h8l-4 4z" fill="#767676"/></svg>
<div style="left:408.2px;top:360.2px;width:56.8px;height:21.6px;background:#fff;border:1px solid #a9a9a9"></div><div style="left:445.4px;top:360.2px;width:1px;height:21.6px;background:#a9a9a9"></div>
<div class="t" style="left:413.7px;top:361.3px;font-size:13.5px;color:#333;">8</div>
<svg style="left:451.3px;top:369.9px;" width="8" height="4" viewBox="0 0 8 4"><path d="M0 0h8l-4 4z" fill="#767676"/></svg>
<div class="t" style="left:123.80000000000001px;top:389.7px;width:300px;text-align:center;font-size:16.5px;color:#555;font-weight:bold;transform:scaleX(0.84);-webkit-text-stroke:0.3px #555;">B</div>
<div class="t" style="left:153.39999999999998px;top:389.7px;width:300px;text-align:center;font-size:16.5px;color:#555;font-weight:bold;font-style:italic;">I</div>
<div class="t" style="left:183.3px;top:389.7px;width:300px;text-align:center;font-size:16px;color:#666;-webkit-text-stroke:0.3px #666;">U</div>
<div style="left:327px;top:407.2px;width:12.8px;height:1px;background:#6a6a6a"></div>
<div class="t" style="left:212.39999999999998px;top:389.4px;width:300px;text-align:center;font-size:11.5px;color:#666;text-decoration:line-through;letter-spacing:-0.3px;">abc</div>
<div class="t" style="left:76.6px;top:417.3px;font-size:13.5px;color:#333;">Alinhamento Horizontal</div>
<div style="left:262px;top:416.2px;width:203px;height:21.4px;background:#fff;border:1px solid #a9a9a9"></div><div style="left:445.4px;top:416.2px;width:1px;height:21.4px;background:#a9a9a9"></div>
<div class="t" style="left:268px;top:417.3px;font-size:13.5px;color:#333;">Esquerda</div>
<svg style="left:451.3px;top:426px;" width="8" height="4" viewBox="0 0 8 4"><path d="M0 0h8l-4 4z" fill="#767676"/></svg>
<div class="t" style="left:76.6px;top:444.4px;font-size:13.5px;color:#333;">Alinhamento Vertical</div>
<div style="left:262px;top:443.3px;width:203px;height:21.4px;background:#fff;border:1px solid #a9a9a9"></div><div style="left:445.4px;top:443.3px;width:1px;height:21.4px;background:#a9a9a9"></div>
<div class="t" style="left:268px;top:444.4px;font-size:13.5px;color:#333;">Topo</div>
<svg style="left:451.3px;top:453px;" width="8" height="4" viewBox="0 0 8 4"><path d="M0 0h8l-4 4z" fill="#767676"/></svg>
<div class="t" style="left:76.6px;top:471.4px;font-size:13.5px;color:#333;">Formato de Texto</div>
<div style="left:262px;top:470.3px;width:203px;height:21.4px;background:#fff;border:1px solid #a9a9a9"></div><div style="left:445.4px;top:470.3px;width:1px;height:21.4px;background:#a9a9a9"></div>
<div class="t" style="left:268px;top:471.4px;font-size:13.5px;color:#333;">Geral</div>
<svg style="left:447.2px;top:473.4px;" width="15" height="15" viewBox="0 0 15 15"><path d="M10.400 1.200q1-1 2 0l1.400 1.400q1 1 0 2l-1 1-3.400-3.400z" fill="#4a7eb8"/><path d="M8.600 3l3.400 3.400-7.800 7.800-3.400-3.400z" fill="#4a7eb8"/><path d="M0.400 11.800l2.800 2.800-3 .4z" fill="#8fb0d8"/></svg>
<div style="left:72px;top:506.1px;width:415.4px;height:25.4px;background:#d4f0e0"></div>
<svg style="left:81.2px;top:514.8000000000001px;" width="5" height="8" viewBox="0 0 5 8"><path d="M0.200 0.200l4 3.700-4 3.700z" fill="#7a7a7a"/></svg>
<div class="t" style="left:96.2px;top:508.7px;font-size:13.4px;color:#333;font-weight:bold;">Texto Adicional</div>
<div style="left:72px;top:537.5500000000001px;width:415.4px;height:25.4px;background:#d4f0e0"></div>
<svg style="left:81.2px;top:546.2500000000001px;" width="5" height="8" viewBox="0 0 5 8"><path d="M0.200 0.200l4 3.700-4 3.700z" fill="#7a7a7a"/></svg>
<div class="t" style="left:95.4px;top:540.15px;font-size:13.4px;color:#333;font-weight:bold;">Posição</div>
<div style="left:72px;top:569.0px;width:415.4px;height:25.4px;background:#d4f0e0"></div>
<svg style="left:81.2px;top:577.7px;" width="5" height="8" viewBox="0 0 5 8"><path d="M0.200 0.200l4 3.700-4 3.700z" fill="#7a7a7a"/></svg>
<div class="t" style="left:95.4px;top:571.6px;font-size:13.4px;color:#333;font-weight:bold;">Aparência</div>
<div style="left:72px;top:600.45px;width:415.4px;height:25.4px;background:#d4f0e0"></div>
<svg style="left:81.2px;top:609.1500000000001px;" width="5" height="8" viewBox="0 0 5 8"><path d="M0.200 0.200l4 3.700-4 3.700z" fill="#7a7a7a"/></svg>
<div class="t" style="left:95.4px;top:603.05px;font-size:13.4px;color:#333;font-weight:bold;">Comportamento</div>
<div style="left:72px;top:631.9px;width:415.4px;height:25.4px;background:#d4f0e0"></div>
<svg style="left:81.2px;top:640.6px;" width="5" height="8" viewBox="0 0 5 8"><path d="M0.200 0.200l4 3.700-4 3.700z" fill="#7a7a7a"/></svg>
<div class="t" style="left:95.4px;top:634.5px;font-size:13.4px;color:#333;font-weight:bold;">Design</div>
<div style="left:72px;top:663.35px;width:415.4px;height:25.4px;background:#d4f0e0"></div>
<svg style="left:81.2px;top:672.0500000000001px;" width="5" height="8" viewBox="0 0 5 8"><path d="M0.200 0.200l4 3.700-4 3.700z" fill="#7a7a7a"/></svg>
<div class="t" style="left:95.4px;top:665.95px;font-size:13.4px;color:#333;font-weight:bold;">Exportar</div>
<div style="left:72px;top:811px;width:416px;height:1px;background:#c9c9c9"></div>
<div style="left:73.4px;top:811px;width:104.4px;height:35px;background:#fff;border:1px solid #c9c9c9;border-bottom:none"></div>
<div class="t" style="left:85.2px;top:817.3px;font-size:13.4px;color:#5f9f7e;">Propriedades</div>
<div class="t" style="left:194.6px;top:817.3px;font-size:13.4px;color:#333;">Dicionário</div>
<div class="t" style="left:283.4px;top:817.3px;font-size:13.4px;color:#333;">Árvore de relatório</div>
<!-- design -->
<div style="left:492px;top:178px;width:1080px;height:671px;background:#f1f1f1"></div>
<div style="left:492px;top:177px;width:1080px;height:1px;background:#c4c4c4"></div>
<div style="left:505px;top:143.2px;width:86px;height:34.8px;background:#fff;border-left:1px solid #c6c6c6;border-right:1px solid #c6c6c6;border-top:2px solid #0c6333"></div>
<div class="t" style="left:397.70000000000005px;top:149.7px;width:300px;text-align:center;font-size:13.2px;color:#5f9f7e;">Page1</div>
<svg style="left:606px;top:150px;" width="14" height="14" viewBox="0 0 14 14"><path d="M7 0.400v13.200M0.400 7h13.200" stroke="#333" stroke-width="1.900" fill="none"/></svg>
<div style="left:505px;top:195px;width:931px;height:660px;background:#fff;border:1px solid #c2c2c2"></div>
<div style="left:1553px;top:178px;width:19px;height:671px;background:#fafafa"></div>
<svg style="left:1556px;top:190px;" width="14" height="7" viewBox="0 0 14 7"><path d="M0 7l6.600-7 6.600 7z" fill="#8a8a8a"/></svg>
<svg style="left:1556px;top:829.6px;" width="14" height="7" viewBox="0 0 14 7"><path d="M0 0l6.600 7 6.600-7z" fill="#8a8a8a"/></svg>
<div style="left:1557px;top:206.8px;width:11px;height:304.4px;background:#8a8a8a;border-radius:5.500px"></div>
<!-- report -->
<svg style="left:550px;top:240px;overflow:hidden" width="843" height="609" viewBox="0 0 843 609"><rect x="0.400" y="0.200" width="842" height="609" fill="#fff"/><path d="M9.5 1V609M18.5 1V609M27.5 1V609M36.5 1V609M44.5 1V609M53.5 1V609M62.5 1V609M71.5 1V609M80.5 1V609M89.5 1V609M98.5 1V609M106.5 1V609M115.5 1V609M124.5 1V609M133.5 1V609M142.5 1V609M151.5 1V609M160.5 1V609M168.5 1V609M177.5 1V609M186.5 1V609M195.5 1V609M204.5 1V609M213.5 1V609M222.5 1V609M230.5 1V609M239.5 1V609M248.5 1V609M257.5 1V609M266.5 1V609M275.5 1V609M284.5 1V609M292.5 1V609M301.5 1V609M310.5 1V609M319.5 1V609M328.5 1V609M337.5 1V609M346.5 1V609M354.5 1V609M363.5 1V609M372.5 1V609M381.5 1V609M390.5 1V609M399.5 1V609M408.5 1V609M416.5 1V609M425.5 1V609M434.5 1V609M443.5 1V609M452.5 1V609M461.5 1V609M470.5 1V609M478.5 1V609M487.5 1V609M496.5 1V609M505.5 1V609M514.5 1V609M523.5 1V609M532.5 1V609M540.5 1V609M549.5 1V609M558.5 1V609M567.5 1V609M576.5 1V609M585.5 1V609M594.5 1V609M602.5 1V609M611.5 1V609M620.5 1V609M629.5 1V609M638.5 1V609M647.5 1V609M656.5 1V609M664.5 1V609M673.5 1V609M682.5 1V609M691.5 1V609M700.5 1V609M709.5 1V609M718.5 1V609M726.5 1V609M735.5 1V609M744.5 1V609M753.5 1V609M762.5 1V609M771.5 1V609M780.5 1V609M788.5 1V609M797.5 1V609M806.5 1V609M815.5 1V609M824.5 1V609M833.5 1V609M1 9.5H842M1 18.5H842M1 26.5H842M1 35.5H842M1 44.5H842M1 53.5H842M1 62.5H842M1 71.5H842M1 80.5H842M1 88.5H842M1 97.5H842M1 106.5H842M1 115.5H842M1 124.5H842M1 133.5H842M1 142.5H842M1 150.5H842M1 159.5H842M1 168.5H842M1 177.5H842M1 186.5H842M1 195.5H842M1 204.5H842M1 212.5H842M1 221.5H842M1 230.5H842M1 239.5H842M1 248.5H842M1 257.5H842M1 266.5H842M1 274.5H842M1 283.5H842M1 292.5H842M1 301.5H842M1 310.5H842M1 319.5H842M1 328.5H842M1 337.5H842M1 345.5H842M1 354.5H842M1 363.5H842M1 372.5H842M1 381.5H842M1 390.5H842M1 399.5H842M1 407.5H842M1 416.5H842M1 425.5H842M1 434.5H842M1 443.5H842M1 452.5H842M1 461.5H842M1 469.5H842M1 478.5H842M1 487.5H842M1 496.5H842M1 505.5H842M1 514.5H842M1 523.5H842M1 531.5H842M1 540.5H842M1 549.5H842M1 558.5H842M1 567.5H842M1 576.5H842M1 585.5H842M1 593.5H842M1 602.5H842" fill="none" stroke="#c8c8c8" stroke-width="1" stroke-dasharray="0.9 0.87"/><path d="M0.800 609V0.700H842.1" fill="none" stroke="#8a8a8a" stroke-width="1.100"/><path d="M841.9 0.200V609" fill="none" stroke="#999" stroke-width="1.800"/><g transform="translate(-550 -240)"><path d="M577.26 638.500H1365.27" stroke="#111" stroke-width="1.300" stroke-dasharray="3.300 2.200" fill="none"/><path d="M577.26 275.43H1365.27M577.26 275.43V576.89M1365.27 275.43V576.89M577.26 576.89H1365.27M577.26 310.89H1365.27M577.26 346.36H1365.27M577.26 381.83H1365.27M577.26 417.29H1365.27M577.26 452.76H1365.27M789.76 275.43V310.89M904.86 275.43V310.89M860.59 310.89V346.36M1055.38 310.89V346.36M1126.21 310.89V346.36M1179.33 310.89V346.36M798.61 346.36V381.83M1011.11 346.36V381.83M1126.21 346.36V381.83M745.49 381.83V417.29M869.44 381.83V417.29M993.4 381.83V417.29M1126.21 381.83V417.29M577.26 647.82H1365.27M577.26 647.82V869.49M1365.27 647.82V869.49M577.26 683.29H1365.27M577.26 718.76H1365.27M577.26 754.22H1365.27M577.26 789.69H1365.27M577.26 825.16H1365.27M789.76 647.82V683.29M904.86 647.82V683.29M1152.77 683.29V869.49M701.22 754.22V789.69M825.17 754.22V789.69M949.13 754.22V789.69M1019.96 754.22V789.69M825.17 789.69V825.16M949.13 789.69V825.16M1019.96 789.69V825.16" stroke="#0a0a0a" stroke-width="1.600" fill="none" stroke-linecap="square"/><path d="M1197.04 262.49V257.69H1201.84M1360.47 257.69H1365.27V262.49M1197.04 270.63V275.43H1201.84M1360.47 275.43H1365.27V270.63M798.61 289.09000000000003V284.29H803.41M900.0600000000001 284.29H904.86V289.09000000000003M798.61 306.09V310.89H803.41M900.0600000000001 310.89H904.86V306.09M913.71 289.09000000000003V284.29H918.51M1360.47 284.29H1365.27V289.09000000000003M913.71 306.09V310.89H918.51M1360.47 310.89H1365.27V306.09M577.26 315.69V310.89H582.06M678.71 310.89H683.51V315.69M577.26 323.83V328.63H582.06M678.71 328.63H683.51V323.83M586.12 333.43V328.63H590.92M846.94 328.63H851.74V333.43M586.12 341.56V346.36H590.92M846.94 346.36H851.74V341.56M860.59 315.69V310.89H865.39M1041.72 310.89H1046.52V315.69M860.59 323.83V328.63H865.39M1041.72 328.63H1046.52V323.83M869.44 333.43V328.63H874.24M1041.72 328.63H1046.52V333.43M869.44 341.56V346.36H874.24M1041.72 346.36H1046.52V341.56M1055.38 315.69V310.89H1060.18M1103.7 310.89H1108.5V315.69M1055.38 323.83V328.63H1060.18M1103.7 328.63H1108.5V323.83M1064.23 333.43V328.63H1069.03M1112.56 328.63H1117.36V333.43M1064.23 341.56V346.36H1069.03M1112.56 346.36H1117.36V341.56M1126.21 315.69V310.89H1131.01M1156.8300000000002 310.89H1161.63V315.69M1126.21 323.83V328.63H1131.01M1156.8300000000002 328.63H1161.63V323.83M1135.06 333.43V328.63H1139.86M1174.53 328.63H1179.33V333.43M1135.06 341.56V346.36H1139.86M1174.53 346.36H1179.33V341.56M1179.33 315.69V310.89H1184.1299999999999M1360.47 310.89H1365.27V315.69M1179.33 323.83V328.63H1184.1299999999999M1360.47 328.63H1365.27V323.83M1188.19 333.43V328.63H1192.99M1360.47 328.63H1365.27V333.43M1188.19 341.56V346.36H1192.99M1360.47 346.36H1365.27V341.56M577.26 351.16V346.36H582.06M714.13 346.36H718.93V351.16M577.26 359.28999999999996V364.09H582.06M714.13 364.09H718.93V359.28999999999996M586.12 368.89V364.09H590.92M784.96 364.09H789.76V368.89M586.12 377.03V381.83H590.92M784.96 381.83H789.76V377.03M798.61 351.16V346.36H803.41M935.48 346.36H940.28V351.16M798.61 359.28999999999996V364.09H803.41M935.48 364.09H940.28V359.28999999999996M807.47 368.89V364.09H812.27M997.45 364.09H1002.25V368.89M807.47 377.03V381.83H812.27M997.45 381.83H1002.25V377.03M1011.11 351.16V346.36H1015.91M1121.41 346.36H1126.21V351.16M1011.11 359.28999999999996V364.09H1015.91M1121.41 364.09H1126.21V359.28999999999996M1019.96 368.89V364.09H1024.76M1112.56 364.09H1117.36V368.89M1019.96 377.03V381.83H1024.76M1112.56 381.83H1117.36V377.03M1126.21 351.16V346.36H1131.01M1236.51 346.36H1241.31V351.16M1126.21 359.28999999999996V364.09H1131.01M1236.51 364.09H1241.31V359.28999999999996M1135.06 368.89V364.09H1139.86M1360.47 364.09H1365.27V368.89M1135.06 377.03V381.83H1139.86M1360.47 381.83H1365.27V377.03M577.26 386.63V381.83H582.06M740.69 381.83H745.49V386.63M577.26 394.76V399.56H582.06M740.69 399.56H745.49V394.76M586.12 404.36V399.56H590.92M740.69 399.56H745.49V404.36M586.12 412.49V417.29H590.92M740.69 417.29H745.49V412.49M745.49 386.63V381.83H750.29M864.6400000000001 381.83H869.44V386.63M745.49 394.76V399.56H750.29M864.6400000000001 399.56H869.44V394.76M754.34 404.36V399.56H759.14M864.6400000000001 399.56H869.44V404.36M754.34 412.49V417.29H759.14M864.6400000000001 417.29H869.44V412.49M869.44 386.63V381.83H874.24M988.6 381.83H993.4V386.63M869.44 394.76V399.56H874.24M988.6 399.56H993.4V394.76M878.3 404.36V399.56H883.0999999999999M988.6 399.56H993.4V404.36M878.3 412.49V417.29H883.0999999999999M988.6 417.29H993.4V412.49M993.4 386.63V381.83H998.1999999999999M1121.41 381.83H1126.21V386.63M993.4 394.76V399.56H998.1999999999999M1121.41 399.56H1126.21V394.76M1002.25 404.36V399.56H1007.05M1121.41 399.56H1126.21V404.36M1002.25 412.49V417.29H1007.05M1121.41 417.29H1126.21V412.49M1126.21 386.63V381.83H1131.01M1351.6100000000001 381.83H1356.41V386.63M1126.21 394.76V399.56H1131.01M1351.6100000000001 399.56H1356.41V394.76M1135.06 404.36V399.56H1139.86M1351.6100000000001 399.56H1356.41V404.36M1135.06 412.49V417.29H1139.86M1351.6100000000001 417.29H1356.41V412.49M577.26 422.09000000000003V417.29H582.06M740.69 417.29H745.49V422.09000000000003M577.26 430.22999999999996V435.03H582.06M740.69 435.03H745.49V430.22999999999996M586.12 439.83V435.03H590.92M1351.6100000000001 435.03H1356.41V439.83M586.12 447.96V452.76H590.92M1351.6100000000001 452.76H1356.41V447.96M577.26 457.56V452.76H582.06M740.69 452.76H745.49V457.56M577.26 465.69V470.49H582.06M740.69 470.49H745.49V465.69M586.12 484.16V479.36H590.92M1342.76 479.36H1347.56V484.16M586.12 563.22V568.02H590.92M1342.76 568.02H1347.56V563.22M1197.04 581.6899999999999V576.89H1201.84M1360.47 576.89H1365.27V581.6899999999999M1197.04 589.82V594.62H1201.84M1360.47 594.62H1365.27V589.82M1250.17 626.02V621.22H1254.97M1360.47 621.22H1365.27V626.02M1250.17 634.1600000000001V638.96H1254.97M1360.47 638.96H1365.27V634.1600000000001M798.61 661.49V656.69H803.41M900.0600000000001 656.69H904.86V661.49M798.61 678.49V683.29H803.41M900.0600000000001 683.29H904.86V678.49M913.71 661.49V656.69H918.51M1360.47 656.69H1365.27V661.49M913.71 678.49V683.29H918.51M1360.47 683.29H1365.27V678.49M577.26 688.0899999999999V683.29H582.06M740.69 683.29H745.49V688.0899999999999M577.26 696.22V701.02H582.06M740.69 701.02H745.49V696.22M586.12 705.8199999999999V701.02H590.92M1139.1200000000001 701.02H1143.92V705.8199999999999M586.12 713.96V718.76H590.92M1139.1200000000001 718.76H1143.92V713.96M1152.77 688.0899999999999V683.29H1157.57M1263.07 683.29H1267.87V688.0899999999999M1152.77 696.22V701.02H1157.57M1263.07 701.02H1267.87V696.22M1161.63 705.8199999999999V701.02H1166.43M1351.6100000000001 701.02H1356.41V705.8199999999999M1161.63 713.96V718.76H1166.43M1351.6100000000001 718.76H1356.41V713.96M577.26 723.56V718.76H582.06M678.71 718.76H683.51V723.56M577.26 731.69V736.49H582.06M678.71 736.49H683.51V731.69M586.12 741.29V736.49H590.92M1139.1200000000001 736.49H1143.92V741.29M586.12 749.4200000000001V754.22H590.92M1139.1200000000001 754.22H1143.92V749.4200000000001M1152.77 723.56V718.76H1157.57M1333.91 718.76H1338.71V723.56M1152.77 731.69V736.49H1157.57M1333.91 736.49H1338.71V731.69M1161.63 741.29V736.49H1166.43M1333.91 736.49H1338.71V741.29M1161.63 749.4200000000001V754.22H1166.43M1333.91 754.22H1338.71V749.4200000000001M577.26 759.02V754.22H582.06M696.4200000000001 754.22H701.22V759.02M577.26 767.1600000000001V771.96H582.06M696.4200000000001 771.96H701.22V767.1600000000001M586.12 776.76V771.96H590.92M678.71 771.96H683.51V776.76M586.12 784.8900000000001V789.69H590.92M678.71 789.69H683.51V784.8900000000001M701.22 759.02V754.22H706.02M820.37 754.22H825.17V759.02M701.22 767.1600000000001V771.96H706.02M820.37 771.96H825.17V767.1600000000001M710.07 776.76V771.96H714.87M811.5200000000001 771.96H816.32V776.76M710.07 784.8900000000001V789.69H714.87M811.5200000000001 789.69H816.32V784.8900000000001M825.17 759.02V754.22H829.9699999999999M944.33 754.22H949.13V759.02M825.17 767.1600000000001V771.96H829.9699999999999M944.33 771.96H949.13V767.1600000000001M834.03 776.76V771.96H838.8299999999999M926.62 771.96H931.42V776.76M834.03 784.8900000000001V789.69H838.8299999999999M926.62 789.69H931.42V784.8900000000001M949.13 759.02V754.22H953.93M1015.1600000000001 754.22H1019.96V759.02M949.13 767.1600000000001V771.96H953.93M1015.1600000000001 771.96H1019.96V767.1600000000001M957.98 776.76V771.96H962.78M1015.1600000000001 771.96H1019.96V776.76M957.98 784.8900000000001V789.69H962.78M1015.1600000000001 789.69H1019.96V784.8900000000001M1019.96 759.02V754.22H1024.76M1130.26 754.22H1135.06V759.02M1019.96 767.1600000000001V771.96H1024.76M1130.26 771.96H1135.06V767.1600000000001M1028.82 776.76V771.96H1033.62M1121.41 771.96H1126.21V776.76M1028.82 784.8900000000001V789.69H1033.62M1121.41 789.69H1126.21V784.8900000000001M1152.77 759.02V754.22H1157.57M1333.91 754.22H1338.71V759.02M1152.77 767.1600000000001V771.96H1157.57M1333.91 771.96H1338.71V767.1600000000001M1161.63 776.76V771.96H1166.43M1351.6100000000001 771.96H1356.41V776.76M1161.63 784.8900000000001V789.69H1166.43M1351.6100000000001 789.69H1356.41V784.8900000000001M577.26 794.49V789.69H582.06M696.4200000000001 789.69H701.22V794.49M577.26 802.62V807.42H582.06M696.4200000000001 807.42H701.22V802.62M586.12 812.2199999999999V807.42H590.92M696.4200000000001 807.42H701.22V812.2199999999999M586.12 820.36V825.16H590.92M696.4200000000001 825.16H701.22V820.36M825.17 794.49V789.69H829.9699999999999M944.33 789.69H949.13V794.49M825.17 802.62V807.42H829.9699999999999M944.33 807.42H949.13V802.62M834.03 812.2199999999999V807.42H838.8299999999999M882.35 807.42H887.15V812.2199999999999M834.03 820.36V825.16H838.8299999999999M882.35 825.16H887.15V820.36M949.13 794.49V789.69H953.93M1015.1600000000001 789.69H1019.96V794.49M949.13 802.62V807.42H953.93M1015.1600000000001 807.42H1019.96V802.62M957.98 812.2199999999999V807.42H962.78M1015.1600000000001 807.42H1019.96V812.2199999999999M957.98 820.36V825.16H962.78M1015.1600000000001 825.16H1019.96V820.36M1019.96 794.49V789.69H1024.76M1130.26 789.69H1135.06V794.49M1019.96 802.62V807.42H1024.76M1130.26 807.42H1135.06V802.62M1028.82 812.2199999999999V807.42H1033.62M1121.41 807.42H1126.21V812.2199999999999M1028.82 820.36V825.16H1033.62M1121.41 825.16H1126.21V820.36M1152.77 794.49V789.69H1157.57M1263.07 789.69H1267.87V794.49M1152.77 802.62V807.42H1157.57M1263.07 807.42H1267.87V802.62M1161.63 812.2199999999999V807.42H1166.43M1254.22 807.42H1259.02V812.2199999999999M1161.63 820.36V825.16H1166.43M1254.22 825.16H1259.02V820.36M577.26 829.9599999999999V825.16H582.06M873.5 825.16H878.3V829.9599999999999M577.26 838.09V842.89H582.06M873.5 842.89H878.3V838.09M1152.77 829.9599999999999V825.16H1157.57M1316.2 825.16H1321.0V829.9599999999999M1152.77 838.09V842.89H1157.57M1316.2 842.89H1321.0V838.09M1161.63 847.6899999999999V842.89H1166.43M1316.2 842.89H1321.0V847.6899999999999M1161.63 855.82V860.62H1166.43M1316.2 860.62H1321.0V855.82" stroke="#1c1c1c" stroke-width="1.400" fill="none"/><path d="M577.26 311H683.51" stroke="#7a7a7a" stroke-width="1.600" fill="none"/><path d="M683.51 311V329.400H577.26" stroke="#8a8a8a" stroke-width="1" stroke-dasharray="1.500 1.500" fill="none"/><rect x="574.86" y="308.6" width="4.800" height="4.800" fill="#757575"/><rect x="574.86" y="317.8" width="4.800" height="4.800" fill="#757575"/><rect x="574.86" y="327.0" width="4.800" height="4.800" fill="#757575"/><rect x="627.99" y="308.6" width="4.800" height="4.800" fill="#757575"/><rect x="627.99" y="327.0" width="4.800" height="4.800" fill="#757575"/><rect x="681.11" y="308.6" width="4.800" height="4.800" fill="#757575"/><rect x="681.11" y="317.8" width="4.800" height="4.800" fill="#757575"/><rect x="681.11" y="327.0" width="4.800" height="4.800" fill="#757575"/></g></svg>
<div class="rep" style="left:0;top:0;width:1602px;height:849px;overflow:hidden"><div class="rc" style="left:1197.04px;top:257.69px;width:167.73px;height:23.74px;overflow:hidden;"><div class="t" style="left:3.4px;top:-0.6px;font-size:15px;font-weight:bold;">RECIBO DO PAGADOR</div></div>
<div class="rc" style="left:798.61px;top:284.29px;width:105.75px;height:32.6px;overflow:hidden;"><div class="t" style="left:2.9px;top:-1.3px;font-size:14.8px;font-weight:bold;">{root.NumBanco}</div></div>
<div class="rc" style="left:913.71px;top:284.29px;width:451.06px;height:32.6px;overflow:hidden;"><div class="t" style="left:4.2px;top:-1.3px;font-size:14.8px;font-weight:bold;">{root.LinhaDig}</div></div>
<div class="rc" style="left:577.26px;top:310.89px;width:105.75px;height:23.74px;overflow:hidden;"><div class="t" style="left:2.9px;top:-2.9px;font-size:12px;">Beneficiário</div></div>
<div class="rc" style="left:586.12px;top:328.63px;width:265.12px;height:23.73px;overflow:hidden;"><div class="t" style="left:3.0px;top:-1.8px;font-size:13.4px;">{root.Beneficiario}</div></div>
<div class="rc" style="left:860.59px;top:310.89px;width:185.43px;height:23.74px;overflow:hidden;"><div class="t" style="left:2.9px;top:-2.9px;font-size:12px;">Agência / Código do Beneficiário</div></div>
<div class="rc" style="left:869.44px;top:328.63px;width:176.58px;height:23.73px;overflow:hidden;"><div class="t" style="left:3.0px;top:-1.8px;font-size:13.4px;">{root.Agencia}/{root.Conta}</div></div>
<div class="rc" style="left:1055.38px;top:310.89px;width:52.62px;height:23.74px;overflow:hidden;"><div class="t" style="left:2.9px;top:-2.9px;font-size:12px;">Espécie</div></div>
<div class="rc" style="left:1064.23px;top:328.63px;width:52.63px;height:23.73px;overflow:hidden;"><div class="t" style="left:3.0px;top:-1.8px;font-size:13.4px;">REAL</div></div>
<div class="rc" style="left:1126.21px;top:310.89px;width:34.92px;height:23.74px;overflow:hidden;"><div class="t" style="left:2.9px;top:-2.9px;font-size:12px;">Qtd</div></div>
<div class="rc" style="left:1179.33px;top:310.89px;width:185.44px;height:23.74px;overflow:hidden;"><div class="t" style="left:2.9px;top:-2.9px;font-size:12px;">Nosso número</div></div>
<div class="rc" style="left:1188.19px;top:328.63px;width:176.58px;height:23.73px;overflow:hidden;"><div class="t" style="left:3.0px;top:-1.8px;font-size:13.4px;">{root.NossoNumero}</div></div>
<div class="rc" style="left:577.26px;top:346.36px;width:141.17px;height:23.73px;overflow:hidden;"><div class="t" style="left:2.9px;top:-2.9px;font-size:12px;">Número do documento</div></div>
<div class="rc" style="left:586.12px;top:364.09px;width:203.14px;height:23.74px;overflow:hidden;"><div class="t" style="left:3.0px;top:-1.8px;font-size:13.4px;">{root.Duplic}-{root.Prest}</div></div>
<div class="rc" style="left:798.61px;top:346.36px;width:141.17px;height:23.73px;overflow:hidden;"><div class="t" style="left:2.9px;top:-2.9px;font-size:12px;">CPF / CNPJ</div></div>
<div class="rc" style="left:807.47px;top:364.09px;width:194.28px;height:23.74px;overflow:hidden;"><div class="t" style="left:3.0px;top:-1.8px;font-size:13.4px;">{root.CPF_CNPJ}</div></div>
<div class="rc" style="left:1011.11px;top:346.36px;width:114.6px;height:23.73px;overflow:hidden;"><div class="t" style="left:2.9px;top:-2.9px;font-size:12px;">Data de Vencimento</div></div>
<div class="rc" style="left:1019.96px;top:364.09px;width:96.9px;height:23.74px;overflow:hidden;"><div class="t" style="left:3.0px;top:-1.8px;font-size:13.4px;">{root.DataVencimento}</div></div>
<div class="rc" style="left:1126.21px;top:346.36px;width:114.6px;height:23.73px;overflow:hidden;"><div class="t" style="left:2.9px;top:-2.9px;font-size:12px;">Valor Documento</div></div>
<div class="rc" style="left:1135.06px;top:364.09px;width:229.71px;height:23.74px;overflow:hidden;"><div class="t" style="left:3.0px;top:-1.8px;font-size:13.4px;">R$ {Format(&quot;{0:N2}&quot;, root.ValorDocumento)}</div></div>
<div class="rc" style="left:577.26px;top:381.83px;width:167.73px;height:23.73px;overflow:hidden;"><div class="t" style="left:2.9px;top:-2.9px;font-size:12px;">(-) Descontos / Abatimentos</div></div>
<div class="rc" style="left:745.49px;top:381.83px;width:123.45px;height:23.73px;overflow:hidden;"><div class="t" style="left:2.9px;top:-2.9px;font-size:12px;">(-) Outras Deduções</div></div>
<div class="rc" style="left:869.44px;top:381.83px;width:123.46px;height:23.73px;overflow:hidden;"><div class="t" style="left:2.9px;top:-2.9px;font-size:12px;">(+) Mora / Multa</div></div>
<div class="rc" style="left:878.3px;top:399.56px;width:114.6px;height:23.73px;overflow:hidden;"><div class="t" style="left:3.0px;top:-1.8px;font-size:13.4px;">R$ {Format(&quot;{0:N2}&quot;, root.ValorMora)}</div></div>
<div class="rc" style="left:993.4px;top:381.83px;width:132.31px;height:23.73px;overflow:hidden;"><div class="t" style="left:2.9px;top:-2.9px;font-size:12px;">(+) Outros Acréscimos</div></div>
<div class="rc" style="left:1126.21px;top:381.83px;width:229.7px;height:23.73px;overflow:hidden;"><div class="t" style="left:2.9px;top:-2.9px;font-size:12px;">(=) Valor Cobrado</div></div>
<div class="rc" style="left:1135.06px;top:399.56px;width:220.85px;height:23.73px;overflow:hidden;"><div class="t" style="left:3.0px;top:-1.8px;font-size:13.4px;">R$ {Format(&quot;{0:N2}&quot;, root.ValorDocumento)}</div></div>
<div class="rc" style="left:577.26px;top:417.29px;width:167.73px;height:23.74px;overflow:hidden;"><div class="t" style="left:2.9px;top:-2.9px;font-size:12px;">Pagador</div></div>
<div class="rc" style="left:586.12px;top:435.03px;width:769.79px;height:23.73px;overflow:hidden;"><div class="t" style="left:3.0px;top:-1.8px;font-size:13.4px;">{root.Pagador} / {root.CPFCNPJPagador}</div></div>
<div class="rc" style="left:577.26px;top:452.76px;width:167.73px;height:23.73px;overflow:hidden;"><div class="t" style="left:2.9px;top:-2.9px;font-size:12px;">Instruções</div></div>
<div class="rc t" style="left:586.12px;top:492.49px;width:761.44px;height:60px;line-height:60px;text-align:center;font-size:39px">TESTE</div>
<div class="rc" style="left:1197.04px;top:576.89px;width:167.73px;height:23.73px;overflow:hidden;"><div class="t" style="left:2.9px;top:-2.9px;font-size:12px;">Autenticação Mecânica</div></div>
<div class="rc" style="left:1250.17px;top:621.22px;width:114.6px;height:23.74px;overflow:hidden;"><div class="t" style="left:2.9px;top:-1.9px;font-size:12px;">Corte na linha abaixo</div></div>
<div class="rc" style="left:798.61px;top:656.69px;width:105.75px;height:32.6px;overflow:hidden;"><div class="t" style="left:2.9px;top:-1.3px;font-size:14.8px;font-weight:bold;">{root.NumBanco}</div></div>
<div class="rc" style="left:913.71px;top:656.69px;width:451.06px;height:32.6px;overflow:hidden;"><div class="t" style="left:4.2px;top:-1.3px;font-size:14.8px;font-weight:bold;">{root.LinhaDig}</div></div>
<div class="rc" style="left:577.26px;top:683.29px;width:167.73px;height:23.73px;overflow:hidden;"><div class="t" style="left:2.9px;top:-2.2px;font-size:12px;">Local de Pagamento</div></div>
<div class="rc" style="left:1152.77px;top:683.29px;width:114.6px;height:23.73px;overflow:hidden;"><div class="t" style="left:2.9px;top:-2.2px;font-size:12px;">Data de Vencimento</div></div>
<div class="rc" style="left:1161.63px;top:701.02px;width:194.28px;height:23.74px;overflow:hidden;"><div class="t" style="left:3.0px;top:-1.8px;font-size:13.4px;">{root.DataVencimento}</div></div>
<div class="rc" style="left:577.26px;top:718.76px;width:105.75px;height:23.73px;overflow:hidden;"><div class="t" style="left:2.9px;top:-3.5px;font-size:12px;">Beneficiário</div></div>
<div class="rc" style="left:586.12px;top:736.49px;width:557.3px;height:23.73px;overflow:hidden;"><div class="t" style="left:3.0px;top:-1.8px;font-size:13.4px;">{root.Beneficiario}</div></div>
<div class="rc" style="left:1152.77px;top:718.76px;width:185.44px;height:23.73px;overflow:hidden;"><div class="t" style="left:2.9px;top:-3.5px;font-size:12px;">Agência / Código do Beneficiário</div></div>
<div class="rc" style="left:1161.63px;top:736.49px;width:176.58px;height:23.73px;overflow:hidden;"><div class="t" style="left:3.0px;top:-1.8px;font-size:13.4px;">{root.Agencia}/{root.Conta}</div></div>
<div class="rc" style="left:577.26px;top:754.22px;width:123.46px;height:23.74px;overflow:hidden;"><div class="t" style="left:2.9px;top:-2.9px;font-size:12px;">Data do Documento</div></div>
<div class="rc" style="left:586.12px;top:771.96px;width:96.89px;height:23.73px;overflow:hidden;"><div class="t" style="left:3.0px;top:-1.8px;font-size:13.4px;">{root.DataDocumento}</div></div>
<div class="rc" style="left:701.22px;top:754.22px;width:123.45px;height:23.74px;overflow:hidden;"><div class="t" style="left:2.9px;top:-2.9px;font-size:12px;">Nº do Documento</div></div>
<div class="rc" style="left:710.07px;top:771.96px;width:105.75px;height:23.73px;overflow:hidden;"><div class="t" style="left:3.0px;top:-1.8px;font-size:13.4px;">{root.Duplic}-{root.Prest}</div></div>
<div class="rc" style="left:825.17px;top:754.22px;width:123.46px;height:23.74px;overflow:hidden;"><div class="t" style="left:2.9px;top:-2.9px;font-size:12px;">Espécie Doc.</div></div>
<div class="rc" style="left:834.03px;top:771.96px;width:96.89px;height:23.73px;overflow:hidden;"><div class="t" style="left:3.0px;top:-1.8px;font-size:13.4px;">DM</div></div>
<div class="rc" style="left:949.13px;top:754.22px;width:70.33px;height:23.74px;overflow:hidden;"><div class="t" style="left:2.9px;top:-2.9px;font-size:12px;">Aceite</div></div>
<div class="rc" style="left:957.98px;top:771.96px;width:61.48px;height:23.73px;overflow:hidden;"><div class="t" style="left:3.0px;top:-1.8px;font-size:13.4px;">N</div></div>
<div class="rc" style="left:1019.96px;top:754.22px;width:114.6px;height:23.74px;overflow:hidden;"><div class="t" style="left:2.9px;top:-2.9px;font-size:12px;">Data Processamento</div></div>
<div class="rc" style="left:1028.82px;top:771.96px;width:96.89px;height:23.73px;overflow:hidden;"><div class="t" style="left:3.0px;top:-1.8px;font-size:13.4px;">{root.DataDocumento}</div></div>
<div class="rc" style="left:1152.77px;top:754.22px;width:185.44px;height:23.74px;overflow:hidden;"><div class="t" style="left:2.9px;top:-2.9px;font-size:12px;">Nosso número</div></div>
<div class="rc" style="left:1161.63px;top:771.96px;width:194.28px;height:23.73px;overflow:hidden;"><div class="t" style="left:3.0px;top:-1.8px;font-size:13.4px;">{root.NossoNumero}</div></div>
<div class="rc" style="left:577.26px;top:789.69px;width:123.46px;height:23.73px;overflow:hidden;"><div class="t" style="left:2.9px;top:-3.7px;font-size:12px;">Carteira</div></div>
<div class="rc" style="left:825.17px;top:789.69px;width:123.46px;height:23.73px;overflow:hidden;"><div class="t" style="left:2.9px;top:-3.7px;font-size:12px;">Espécie</div></div>
<div class="rc" style="left:834.03px;top:807.42px;width:52.62px;height:23.74px;overflow:hidden;"><div class="t" style="left:3.0px;top:-1.8px;font-size:13.4px;">REAL</div></div>
<div class="rc" style="left:949.13px;top:789.69px;width:70.33px;height:23.73px;overflow:hidden;"><div class="t" style="left:2.9px;top:-3.7px;font-size:12px;">Quantidade</div></div>
<div class="rc" style="left:1019.96px;top:789.69px;width:114.6px;height:23.73px;overflow:hidden;"><div class="t" style="left:2.9px;top:-3.7px;font-size:12px;">Valor</div></div>
<div class="rc" style="left:1028.82px;top:807.42px;width:96.89px;height:23.74px;overflow:hidden;"><div class="t" style="left:3.0px;top:-1.8px;font-size:13.4px;">R$ {Format(&quot;{0:N2}&quot;, root.Valor)}</div></div>
<div class="rc" style="left:1152.77px;top:789.69px;width:114.6px;height:23.73px;overflow:hidden;"><div class="t" style="left:2.9px;top:-3.7px;font-size:12px;">Valor Documento</div></div>
<div class="rc" style="left:1161.63px;top:807.42px;width:96.89px;height:23.74px;overflow:hidden;"><div class="t" style="left:3.0px;top:-1.8px;font-size:13.4px;">R$ {Format(&quot;{0:N2}&quot;, root.ValorDocumento)}</div></div>
<div class="rc" style="left:577.26px;top:825.16px;width:300.54px;height:23.73px;overflow:hidden;"><div class="t" style="left:2.9px;top:-2.9px;font-size:12px;">Instruções (texto de responsabilidade do Beneficiário)</div></div>
<div class="rc" style="left:1152.77px;top:825.16px;width:167.73px;height:23.73px;overflow:hidden;"><div class="t" style="left:2.9px;top:-2.9px;font-size:12px;">(-) Descontos / Abatimentos</div></div></div>
<!-- status -->
<div style="left:67.7px;top:135.1px;width:424.9px;height:712.9px;border:4px solid #ff0000;border-radius:4px"></div>
<div style="left:36px;top:849px;width:1536px;height:9px;background:#0c6333"></div>
<div style="left:161px;top:849px;width:1px;height:7px;background:repeating-linear-gradient(180deg,#cfe0d6 0 2px,transparent 2px 3px)"></div>
<div style="left:351px;top:849px;width:1px;height:7px;background:repeating-linear-gradient(180deg,#cfe0d6 0 2px,transparent 2px 3px)"></div>
<div style="left:415px;top:849px;width:1px;height:7px;background:repeating-linear-gradient(180deg,#cfe0d6 0 2px,transparent 2px 3px)"></div>
<div style="left:674px;top:849px;width:1px;height:7px;background:repeating-linear-gradient(180deg,#cfe0d6 0 2px,transparent 2px 3px)"></div>
<div style="left:1180px;top:849px;width:1px;height:7px;background:repeating-linear-gradient(180deg,#cfe0d6 0 2px,transparent 2px 3px)"></div>
<div style="left:1306px;top:849px;width:1px;height:7px;background:repeating-linear-gradient(180deg,#cfe0d6 0 2px,transparent 2px 3px)"></div>
</body>
</html>
